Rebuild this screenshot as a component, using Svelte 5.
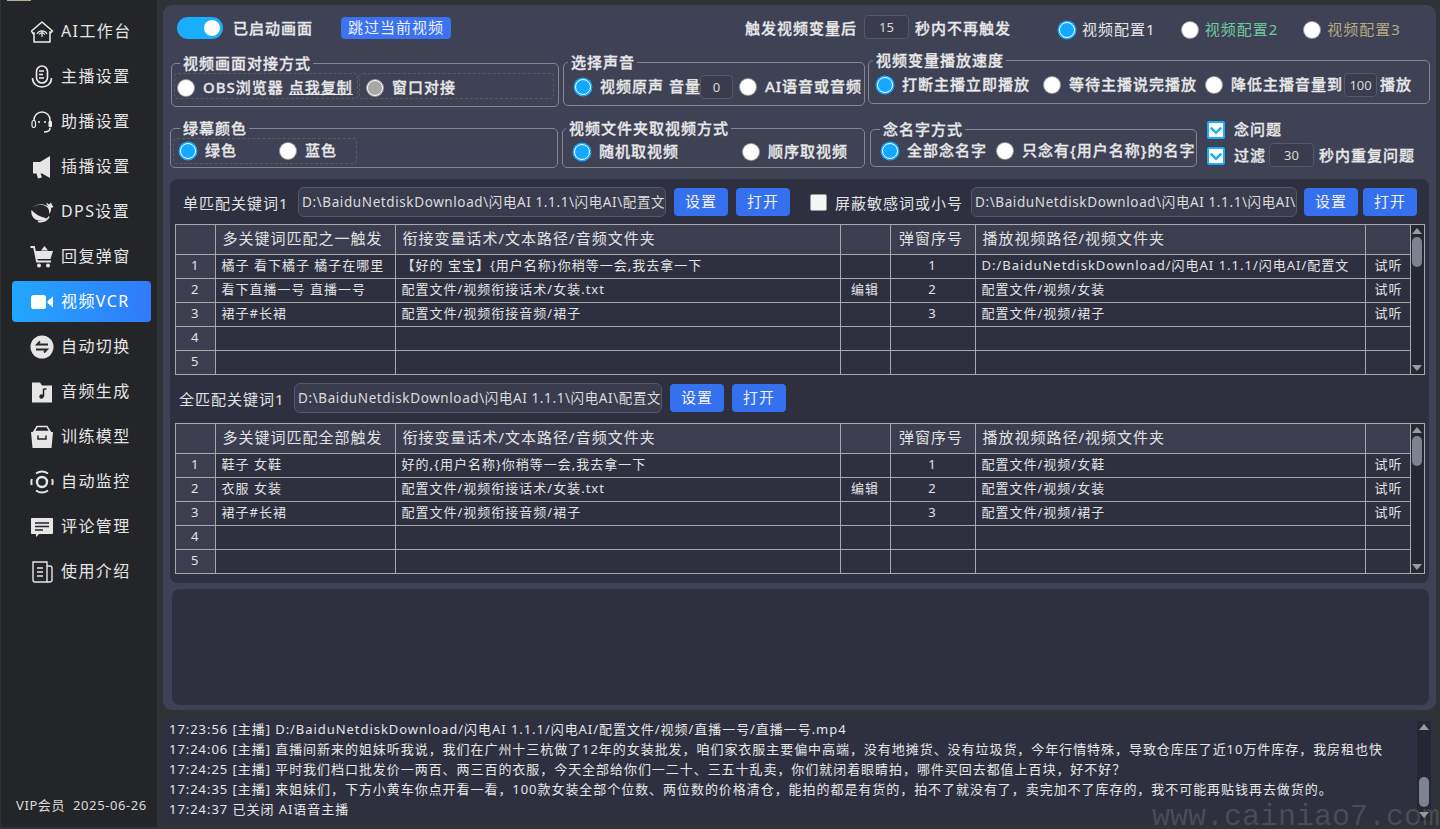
<script>
  const nav = [
    ['AI工作台', 'home'], ['主播设置', 'mic'], ['助播设置', 'head'], ['插播设置', 'horn'],
    ['DPS设置', 'whale'], ['回复弹窗', 'cart'], ['视频VCR', 'video'], ['自动切换', 'swap'],
    ['音频生成', 'music'], ['训练模型', 'box'], ['自动监控', 'watch'], ['评论管理', 'chat'], ['使用介绍', 'doc']
  ]

  const table1 = [
    ['橘子 看下橘子 橘子在哪里', '【好的 宝宝】{用户名称}你稍等一会,我去拿一下', '', '1', 'D:/BaiduNetdiskDownload/闪电AI 1.1.1/闪电AI/配置文', '试听'],
    ['看下直播一号 直播一号', '配置文件/视频衔接话术/女装.txt', '编辑', '2', '配置文件/视频/女装', '试听'],
    ['裙子#长裙', '配置文件/视频衔接音频/裙子', '', '3', '配置文件/视频/裙子', '试听'],
    ['', '', '', '', '', ''],
    ['', '', '', '', '', '']
  ]
  const table2 = [
    ['鞋子 女鞋', '好的,{用户名称}你稍等一会,我去拿一下', '', '1', '配置文件/视频/女鞋', '试听'],
    ['衣服 女装', '配置文件/视频衔接话术/女装.txt', '编辑', '2', '配置文件/视频/女装', '试听'],
    ['裙子#长裙', '配置文件/视频衔接音频/裙子', '', '3', '配置文件/视频/裙子', '试听'],
    ['', '', '', '', '', ''],
    ['', '', '', '', '', '']
  ]

  const logs = [
    '17:23:56 [主播] D:/BaiduNetdiskDownload/闪电AI 1.1.1/闪电AI/配置文件/视频/直播一号/直播一号.mp4',
    '17:24:06 [主播] 直播间新来的姐妹听我说，我们在广州十三杭做了12年的女装批发，咱们家衣服主要偏中高端，没有地摊货、没有垃圾货，今年行情特殊，导致仓库压了近10万件库存，我房租也快',
    '17:24:25 [主播] 平时我们档口批发价一两百、两三百的衣服，今天全部给你们一二十、三五十乱卖，你们就闭着眼睛拍，哪件买回去都值上百块，好不好？',
    '17:24:35 [主播] 来姐妹们，下方小黄车你点开看一看，100款女装全部个位数、两位数的价格清仓，能拍的都是有货的，拍不了就没有了，卖完加不了库存的，我不可能再贴钱再去做货的。',
    '17:24:37 已关闭 AI语音主播'
  ]
</script>

{#snippet icon(name)}
  <svg class="nav-icon" viewBox="0 0 24 24" width="24" height="24">
    {#if name === 'home'}
      <path d="M1.500 11 12 2l10.500 9-1.500 1.600-1-.8V22H4v-9.200l-1 .8z" fill="none" stroke="#eee" stroke-width="1.500" stroke-linejoin="round"/>
      <path d="M7 14a5.500 5.500 0 0 1 10 0M9.300 14.500a3 3 0 0 1 5.400 0" fill="none" stroke="#eee" stroke-width="1.300"/>
      <path d="M11.400 11h1.200v6h-1.200z" fill="#eee"/>
    {:else if name === 'mic'}
      <rect x="6.500" y="1" width="11" height="17" rx="5.500" fill="none" stroke="#eee" stroke-width="1.600"/>
      <path d="M2.500 13c0 12 19 12 19 0" fill="none" stroke="#eee" stroke-width="1.600"/>
      <path d="M9 6h5M9 9.500h4M9 13h5" fill="none" stroke="#eee" stroke-width="1.300"/>
    {:else if name === 'head'}
      <path d="M4 11V10a8 8 0 0 1 16 0v1" fill="none" stroke="#eee" stroke-width="1.400"/>
      <rect x="2" y="10.500" width="3.500" height="7" rx="1.700" fill="none" stroke="#eee" stroke-width="1.200"/>
      <rect x="18.500" y="10.500" width="3.500" height="7" rx="1.700" fill="#eee"/>
      <path d="M20 18c0 3-3 4-6 4" fill="none" stroke="#eee" stroke-width="1.500"/>
      <circle cx="9" cy="12" r="1" fill="#eee"/><circle cx="15" cy="12" r="1" fill="#eee"/>
    {:else if name === 'horn'}
      <path d="M20 1v22l-8-4.500h-1.500l1.500 4-4 1-1.500-5H3V7h7z" fill="#e6e6e6"/>
    {:else if name === 'whale'}
      <path d="M3 7.500A11 11 0 0 1 17 7c2 2 2.500 4 2 7 1.500-1.500 2.500-4 2-6l2.500-1-1.500-2-1-2.500-2 2-2.500-2c0 2 1 3 2 4C15 4 8 2.500 3 7.500z" fill="#e6e6e6"/>
      <path d="M1.500 10c-1 5 2 9.500 7 10.500L14 21l3-2.500C10 17 5 14 1.500 10z" fill="#e6e6e6"/>
      <path d="M8 21.500c4 .5 9-.5 11-5" stroke="#e6e6e6" stroke-width="1.500" fill="none"/>
    {:else if name === 'cart'}
      <path d="M.5 2h3.500l3 14.500h14" fill="none" stroke="#e6e6e6" stroke-width="1.800"/>
      <path d="M5 6h18l-2.500 8H7z" fill="#e6e6e6"/>
      <path d="M11 5.500 14.500 1 18 5.500z" fill="#e6e6e6"/>
      <circle cx="9" cy="20.500" r="2" fill="#e6e6e6"/><circle cx="18" cy="20.500" r="2" fill="#e6e6e6"/>
    {:else if name === 'video'}
      <rect x="1" y="5" width="15" height="14" rx="2.500" fill="#fff"/>
      <path d="M17.500 11 23 6.500v11L17.500 13z" fill="#fff"/>
    {:else if name === 'swap'}
      <circle cx="12" cy="12" r="11.500" fill="#e6e6e6"/>
      <path d="M18 9.500H7l3-3M6 14.500h11l-3 3" fill="none" stroke="#242528" stroke-width="1.800"/>
    {:else if name === 'music'}
      <path d="M2 2.500h8l2 3h10v17H2z" fill="#e6e6e6"/>
      <path d="M13.500 9v7.500M13.500 9h3" stroke="#242528" stroke-width="1.500" fill="none"/>
      <circle cx="11.500" cy="16.500" r="2.200" fill="#242528"/>
    {:else if name === 'box'}
      <path d="M4 6.500 7 1.500h10l3 5z" fill="none" stroke="#e6e6e6" stroke-width="1.500"/>
      <path d="M1 7h22l-1.500 16h-19z" fill="#e6e6e6"/>
      <path d="M8 10.500V14h8v-3.500" fill="none" stroke="#242528" stroke-width="1.500"/>
    {:else if name === 'watch'}
      <circle cx="12" cy="12" r="5" fill="none" stroke="#e6e6e6" stroke-width="2.400"/>
      <path d="M6 3.500a10.500 10.500 0 0 1 12 0M6 20.500a10.500 10.500 0 0 0 12 0" fill="none" stroke="#e6e6e6" stroke-width="2"/>
      <path d="M1.800 9a10.500 10.500 0 0 0 0 6M22.200 9a10.500 10.500 0 0 1 0 6" fill="none" stroke="#e6e6e6" stroke-width="2"/>
    {:else if name === 'chat'}
      <path d="M2 3h20c.6 0 1 .4 1 1v14c0 .6-.4 1-1 1H9l-3 3v-3H2c-.6 0-1-.4-1-1V4c0-.6.4-1 1-1z" fill="#e6e6e6"/>
      <path d="M5 8h14M5 11.500h14M5 15h8" stroke="#242528" stroke-width="1.500"/>
    {:else}
      <path d="M3 2h14v20H5a2 2 0 0 1-2-2z" fill="none" stroke="#e6e6e6" stroke-width="1.400"/>
      <path d="M17 6h3c1 0 2 1 2 2v12c0 1-1 2-2.500 2H17" fill="none" stroke="#e6e6e6" stroke-width="1.400"/>
      <path d="M7 8h6M7 12h6M7 16h6" stroke="#e6e6e6" stroke-width="1.400"/>
    {/if}
  </svg>
{/snippet}

{#snippet radio(label, on = false, cls = '')}
  <span class="radio {cls}">
    <i class="dot" class:on class:grey={cls === 'grey'}></i>
    <span>{label}</span>
  </span>
{/snippet}

{#snippet tick()}
  <i class="check"><svg viewBox="0 0 12 12" width="14" height="14"><path d="M1.500 4 6 8.500 10.500 4" fill="none" stroke="#18a8f8" stroke-width="2"/></svg></i>
{/snippet}

{#snippet grid(title, rows)}
  <div class="table-wrap">
    <table>
      <colgroup>
        <col style="width:39px" /><col style="width:180px" /><col style="width:445px" /><col style="width:50px" />
        <col style="width:85px" /><col style="width:390px" /><col style="width:47px" />
      </colgroup>
      <thead>
        <tr>
          <th></th><th>{title}</th><th>衔接变量话术/文本路径/音频文件夹</th><th></th>
          <th class="mid">弹窗序号</th><th>播放视频路径/视频文件夹</th><th></th>
        </tr>
      </thead>
      <tbody>
        {#each rows as r, i}
          <tr>
            <th class="num">{i + 1}</th>
            <td>{r[0]}</td><td>{r[1]}</td><td class="mid">{r[2]}</td>
            <td class="mid">{r[3]}</td><td>{r[4]}</td><td class="mid">{r[5]}</td>
          </tr>
        {/each}
      </tbody>
    </table>
    <div class="vbar">
      <b class="up"></b>
      <span class="thumb"></span>
      <b class="down"></b>
    </div>
  </div>
{/snippet}

<div class="app">
  <aside class="side">
    <i class="logo-edge"></i>
    <nav>
      {#each nav as [label, ic]}
        <div class="nav-item" class:active={label === '视频VCR'}>
          {@render icon(ic)}
          <span>{label}</span>
        </div>
      {/each}
    </nav>
    <div class="vip">VIP会员&nbsp; 2025-06-26</div>
  </aside>

  <main class="main">
    <section class="panel">
      <div class="top">
        <div class="switch"><i></i></div>
        <span class="strong on-label">已启动画面</span>
        <span class="skip">跳过当前视频</span>
        <span class="strong trig">触发视频变量后</span>
        <span class="num-box w46 trig-box">15</span>
        <span class="strong">秒内不再触发</span>
        <div class="configs">
          {@render radio('视频配置1', true, 'thin')}
          {@render radio('视频配置2', false, 'thin green')}
          {@render radio('视频配置3', false, 'thin tan')}
        </div>
      </div>

      <div class="groups one">
        <fieldset class="f1">
          <legend>视频画面对接方式</legend>
          <div class="dash d1">{@render radio('OBS浏览器', false)}<u>点我复制</u></div>
          <div class="dash d2">{@render radio('窗口对接', false, 'grey')}</div>
        </fieldset>
        <fieldset class="f2">
          <legend>选择声音</legend>
          {@render radio('视频原声 音量', true)}
          <span class="num-box w33">0</span>
          {@render radio('AI语音或音频')}
        </fieldset>
        <fieldset class="f3">
          <legend>视频变量播放速度</legend>
          {@render radio('打断主播立即播放', true, 'r1')}
          {@render radio('等待主播说完播放', false, 'r2')}
          {@render radio('降低主播音量到')}
          <span class="num-box w33">100</span>
          <span class="strong">播放</span>
        </fieldset>
      </div>

      <div class="groups two">
        <fieldset class="g1">
          <legend>绿幕颜色</legend>
          <div class="dash d3">{@render radio('绿色', true)}{@render radio('蓝色')}</div>
        </fieldset>
        <fieldset class="g2">
          <legend>视频文件夹取视频方式</legend>
          {@render radio('随机取视频', true)}
          {@render radio('顺序取视频')}
        </fieldset>
        <fieldset class="g3">
          <legend>念名字方式</legend>
          {@render radio('全部念名字', true)}
          {@render radio('只念有{用户名称}的名字')}
        </fieldset>
        <div class="checks">
          <div class="check-row">{@render tick()}<span class="strong">念问题</span></div>
          <div class="check-row">{@render tick()}<span class="strong">过滤</span><span class="num-box w46 filter-box">30</span><span class="strong">秒内重复问题</span></div>
        </div>
      </div>

      <div class="tables">
        <div class="path-row">
          <span class="path-label">单匹配关键词1</span>
          <div class="path p368">D:\BaiduNetdiskDownload\闪电AI 1.1.1\闪电AI\配置文</div>
          <button>设置</button><button>打开</button>
          <i class="box"></i>
          <span class="mask">屏蔽敏感词或小号</span>
          <div class="path p326">D:\BaiduNetdiskDownload\闪电AI 1.1.1\闪电AI\</div>
          <button class="b-a">设置</button><button class="b-b">打开</button>
        </div>
        {@render grid('多关键词匹配之一触发', table1)}

        <div class="path-row second">
          <span class="path-label">全匹配关键词1</span>
          <div class="path p368">D:\BaiduNetdiskDownload\闪电AI 1.1.1\闪电AI\配置文</div>
          <button>设置</button><button>打开</button>
        </div>
        {@render grid('多关键词匹配全部触发', table2)}
      </div>

      <div class="blank"></div>
    </section>

    <section class="log">
      {#each logs as line}
        <div class="line">{line}</div>
      {/each}
      <div class="vbar logbar">
        <b class="up"></b>
        <span class="thumb"></span>
        <b class="down"></b>
      </div>
    </section>
  </main>

  <div class="mark">www.cainiao7.com</div>
</div>

<style>
  :global(body) {
    margin: 0;
    background: #2f3236;
    overflow: hidden;
  }

  .app {
    position: relative;
    display: flex;
    width: 1440px;
    height: 829px;
    overflow: hidden;
    font-family: "Noto Sans", "Noto Sans CJK SC", sans-serif;
    color: #e8e8e8;
  }

  .side {
    position: relative;
    display: flex;
    flex-direction: column;
    width: 156px;
    height: 827px;
    margin-left: 1px;
    background: #242528;
  }

  .logo-edge {
    position: absolute;
    left: 6px;
    top: 0;
    width: 24px;
    height: 1px;
    background: #b9ad97;
  }

  nav {
    display: flex;
    flex-direction: column;
    gap: 4px;
    padding-top: 11px;
  }

  .nav-item {
    display: flex;
    align-items: center;
    gap: 7px;
    height: 41px;
    margin: 0 6px 0 11px;
    padding-left: 18px;
    border-radius: 4px;
    font-size: 16px;
    letter-spacing: 1.4px;
    color: #e6e6e6;
  }

  .nav-item span { margin-bottom: 4px; }

  .nav-item.active {
    background: linear-gradient(90deg, #22a7fd, #317afb);
    color: #fff;
  }

  .nav-icon { flex: none; }

  .vip {
    position: absolute;
    left: 15px;
    top: 795px;
    font-size: 13px;
    letter-spacing: .6px;
    color: #dcdcdc;
  }

  .main {
    display: flex;
    flex-direction: column;
    gap: 7px;
    width: 1273px;
    margin-left: 6px;
    padding-top: 5px;
  }

  .panel {
    height: 705px;
    box-sizing: border-box;
    padding-top: 1px;
    background: #3f4155;
    border-radius: 9px;
  }

  .strong {
    font-size: 15px;
    font-weight: 500;
    letter-spacing: 1px;
    color: #e8e8e8;
    white-space: nowrap;
    -webkit-text-stroke: .3px currentColor;
  }

  .top {
    display: flex;
    align-items: center;
    height: 44px;
    padding-left: 14px;
  }

  .top .strong { margin-bottom: 2px; }

  .switch {
    position: relative;
    width: 46px;
    height: 22px;
    border-radius: 11px;
    background: #18adfd;
  }

  .switch i {
    position: absolute;
    right: 3px;
    top: 3px;
    width: 16px;
    height: 16px;
    border-radius: 50%;
    background: #fff;
  }

  .on-label { margin-left: 10px; }

  .skip {
    margin-left: 28px;
    padding: 0 7px;
    height: 22px;
    line-height: 20px;
    font-size: 15px;
    letter-spacing: 1px;
    border-radius: 4px;
    background: #3a72f0;
    color: #eef;
    white-space: nowrap;
  }

  .trig { margin-left: 294px; }

  .num-box {
    display: inline-flex;
    align-items: center;
    justify-content: center;
    flex: none;
    box-sizing: border-box;
    height: 24px;
    border: 1px solid #56586a;
    border-radius: 4px;
    background: #3a3c4d;
    font-size: 13px;
    color: #d8d8d8;
  }

  .w46 { width: 45px; }
  .w33 { width: 33px; }

  .trig-box { margin: 0 6px 2px 7px; }
  .filter-box { margin: 0 5px 2px 3px; }

  .configs {
    display: flex;
    gap: 26px;
    margin: 4px 0 0 48px;
  }

  .radio {
    display: inline-flex;
    align-items: center;
    gap: 9px;
    flex: none;
    font-size: 15px;
    font-weight: 500;
    letter-spacing: 1px;
    color: #e8e8e8;
    white-space: nowrap;
    -webkit-text-stroke: .3px currentColor;
  }

  .radio span { margin-bottom: 3px; }

  .radio.thin { gap: 7px; font-weight: 400; -webkit-text-stroke: 0; }
  .radio.green { color: #6fcb9f; }
  .radio.tan { color: #b4ab86; }

  .dot {
    flex: none;
    box-sizing: border-box;
    width: 16px;
    height: 16px;
    border-radius: 50%;
    background: #fff;
    box-shadow: 0 0 0 1px #9d9d9d;
  }

  .dot.on {
    background: #14a9fd;
    border: 1.500px solid #fff;
    box-shadow: 0 0 0 1.500px #14a9fd;
  }

  .dot.grey {
    background: #a8a8a8;
    border: 1.500px solid #fff;
    box-shadow: 0 0 0 1px #9d9d9d;
  }

  .groups {
    display: flex;
    align-items: flex-start;
    padding-left: 8px;
  }

  fieldset {
    display: flex;
    align-items: center;
    margin: 0;
    box-sizing: border-box;
    min-width: 0;
    border: 1px solid #85858f;
    border-radius: 5px;
  }

  legend {
    padding: 0 2px 0 3px;
    font-size: 15px;
    font-weight: 500;
    line-height: 17px;
    letter-spacing: 1px;
    color: #e8e8e8;
    white-space: nowrap;
    -webkit-text-stroke: .3px currentColor;
  }

  .one { height: 52px; margin: 5px 0 13px; }
  .two { height: 48px; }

  .f1 { width: 388px; height: 52px; padding: 0 0 6px 2px; gap: 1px; margin-right: 4px; }
  .f1 legend { margin-left: 6px; }
  .f1 .radio { margin-top: 3px; }
  .f2 { width: 302px; height: 52px; padding: 0 0 3px 11px; margin: -1px 3px 0 0; }
  .f2 legend { margin-left: -7px; }
  .f2 .num-box { margin: 0 7px 0 -1px; }
  .f3 { width: 562px; height: 52px; padding: 0 0 2px 8px; margin-top: -3px; }
  .f3 legend { margin-left: -4px; }
  .f3 .num-box { margin: 0 3px 0 1px; }
  .f3 :global(.r1) { margin-right: 14px; }
  .f3 :global(.r2) { margin-right: 9px; }
  .f3 .strong { margin-bottom: 3px; }

  .dash {
    display: flex;
    align-items: center;
    box-sizing: border-box;
    height: 26px;
    border: 1px dashed #5a5c6b;
    border-radius: 4px;
  }

  .d1 { width: 184px; padding-left: 3px; gap: 5px; }
  .d2 { width: 195px; padding-left: 7px; }
  .d3 { width: 184px; padding-left: 6px; gap: 43px; }

  u {
    font-size: 15px;
    font-weight: 500;
    letter-spacing: 1px;
    white-space: nowrap;
    -webkit-text-stroke: .3px currentColor;
  }

  .g1 { width: 388px; height: 48px; padding: 0 0 3px 2px; margin: 0 4px 0 -1px; }
  .g1 legend { margin-left: 7px; }
  .g2 { width: 303px; height: 48px; padding: 0 0 1px 11px; margin-right: 5px; gap: 64px; }
  .g2 legend { margin-left: -8px; }
  .g3 { width: 327px; height: 46px; padding: 0 0 2px 11px; margin: 1px 10px 0 0; gap: 10px; }
  .g3 legend { margin-left: -2px; }

  .checks {
    display: flex;
    flex-direction: column;
    gap: 2px;
    margin-top: -2px;
  }

  .check-row {
    display: flex;
    align-items: center;
    height: 24px;
  }

  .check-row .strong { margin-bottom: 4px; }

  .check {
    display: flex;
    align-items: center;
    justify-content: center;
    box-sizing: border-box;
    width: 18px;
    height: 18px;
    margin-right: 9px;
    border: 2px solid #1aaeff;
    border-radius: 2px;
    background: #fff;
  }

  .tables {
    box-sizing: border-box;
    width: 1259px;
    height: 404px;
    margin: 11px 0 6px 7px;
    padding: 8px 0 0 5px;
    background: #2e3040;
    border-radius: 8px;
  }

  .path-row {
    display: flex;
    align-items: center;
    height: 30px;
    margin-bottom: 7px;
  }

  .path-row.second {
    margin: 8px 0 10px -4px;
  }

  .path-label {
    width: 123px;
    padding-left: 8px;
    box-sizing: border-box;
    font-size: 15px;
    letter-spacing: 1px;
    color: #e2e2e2;
    white-space: nowrap;
  }

  .path {
    box-sizing: border-box;
    height: 30px;
    padding: 0 3px;
    line-height: 28px;
    overflow: hidden;
    white-space: nowrap;
    border: 1px solid #55576a;
    border-radius: 6px;
    background: #3a3c4d;
    font-size: 13.500px;
    letter-spacing: .6px;
    color: #dcdcdc;
  }

  .p368 { width: 368px; margin-right: 8px; }
  .p326 { width: 326px; margin-right: 7px; }

  button {
    flex: none;
    width: 54px;
    height: 28px;
    margin-right: 8px;
    padding: 0 0 3px;
    border: 0;
    border-radius: 4px;
    background: #3570ee;
    font: inherit;
    font-size: 15px;
    letter-spacing: 1px;
    color: #f2f2f2;
  }

  .b-a { margin-right: 5px; }
  .b-b { margin-right: 0; }

  .box {
    flex: none;
    width: 17px;
    height: 17px;
    margin: 0 8px 0 12px;
    border-radius: 2px;
    background: #f5f5f5;
    border: 1px solid #999;
    box-sizing: border-box;
  }

  .mask {
    width: 136px;
    font-size: 15px;
    letter-spacing: 1px;
    color: #e2e2e2;
    white-space: nowrap;
  }

  .table-wrap {
    position: relative;
    width: 1250px;
    height: 151px;
    box-sizing: border-box;
    border: 1px solid #a9a9a9;
  }

  table {
    width: 1236px;
    table-layout: fixed;
    border-collapse: collapse;
    font-size: 13px;
    letter-spacing: 1px;
    color: #e2e2e2;
  }

  thead th {
    box-sizing: border-box;
    height: 29px;
    padding: 0 0 4px 7px;
    background: #3c3e50;
    border-right: 1px solid #a9a9a9;
    border-bottom: 1px solid #a9a9a9;
    text-align: left;
    font-weight: 400;
    font-size: 15px;
    white-space: nowrap;
  }

  thead th.mid { text-align: center; padding: 0 3px 4px 0; }

  td, tbody th {
    box-sizing: border-box;
    height: 24px;
    padding: 0 0 4px 6px;
    border-right: 1px solid #a9a9a9;
    border-bottom: 1px solid #a9a9a9;
    white-space: nowrap;
    overflow: hidden;
  }

  tbody th.num {
    padding: 0 0 3px;
    background: #3c3e50;
    font-size: 13px;
    font-weight: 400;
    text-align: center;
  }

  td.mid { padding: 0 0 3px; text-align: center; }

  .vbar {
    position: absolute;
    right: 0;
    top: 0;
    bottom: 0;
    width: 13px;
    border-left: 1px solid #a9a9a9;
    background: #252733;
  }

  .thumb {
    position: absolute;
    left: 1px;
    top: 12px;
    width: 10px;
    height: 30px;
    border-radius: 5px;
    background: #7c8290;
  }

  .up, .down {
    position: absolute;
    left: 1px;
    width: 0;
    height: 0;
    border-left: 5px solid transparent;
    border-right: 5px solid transparent;
  }

  .up { top: 3px; border-bottom: 6px solid #9b9b9b; }
  .down { bottom: 3px; border-top: 6px solid #9b9b9b; }

  .blank {
    width: 1257px;
    height: 116px;
    margin-left: 9px;
    background: #2e3040;
    border-radius: 8px;
  }

  .log {
    position: relative;
    box-sizing: border-box;
    width: 1271px;
    height: 106px;
    padding: 2px 0 0 6px;
    background: #2e3040;
    border-radius: 8px;
  }

  .line {
    height: 20px;
    line-height: 20px;
    font-size: 13px;
    letter-spacing: .95px;
    color: #e6e6e6;
    white-space: pre;
  }

  .logbar {
    right: 3px;
    top: 4px;
    bottom: 2px;
    width: 14px;
    border: 0;
    background: #252733;
  }

  .logbar .thumb { top: 56px; left: 2px; height: 30px; }
  .logbar .up, .logbar .down { left: 2px; }

  .mark {
    position: absolute;
    right: 0;
    bottom: 0;
    font-family: "Liberation Mono", monospace;
    font-size: 30px;
    line-height: 24px;
    color: rgba(150, 150, 150, .28);
    white-space: nowrap;
  }
</style>
